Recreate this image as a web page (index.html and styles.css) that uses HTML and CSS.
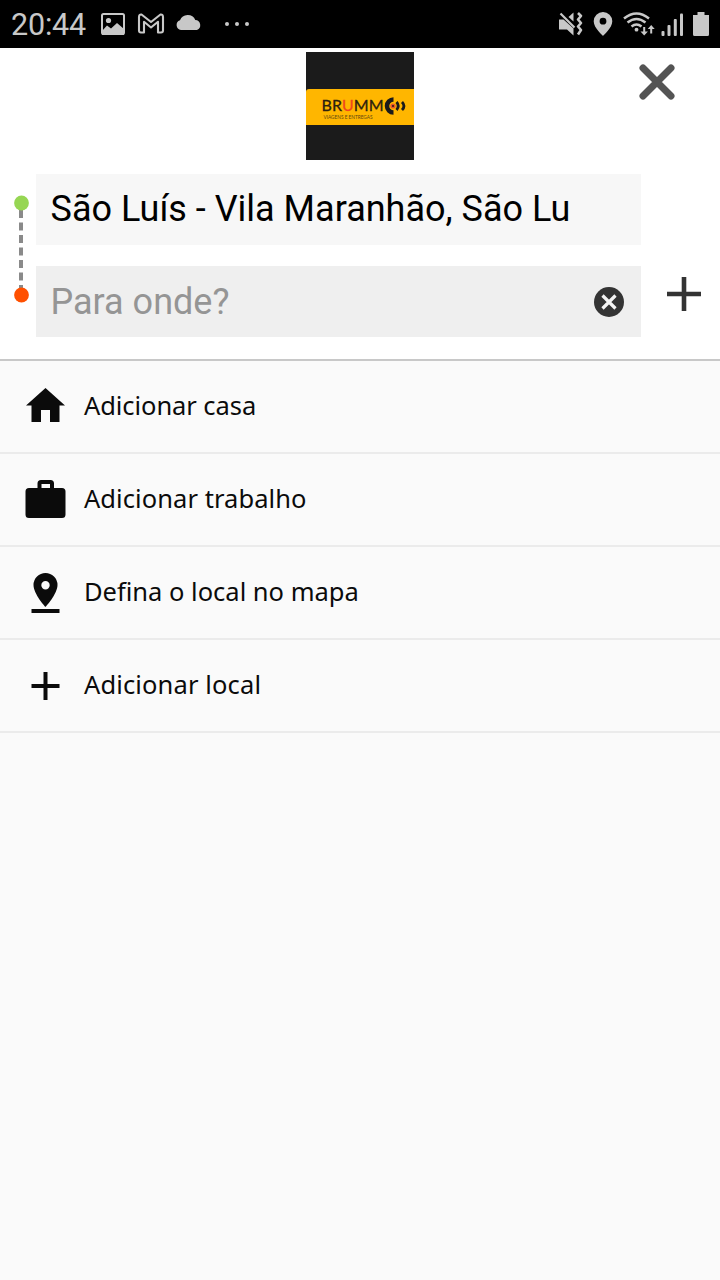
FILE: index.html
```html
<!DOCTYPE html>
<html lang="pt-BR">
<head>
<meta charset="utf-8">
<title>Para onde?</title>
<link rel="stylesheet" href="styles.css">
</head>
<body>
<div class="status-bar">
  <span class="clock">20:44</span>
  <svg class="st-left" width="164" height="48" viewBox="96 0 164 48" fill="#c8c8c8">
    <rect x="102" y="14" width="22" height="20" rx="1.5" fill="none" stroke="#c8c8c8" stroke-width="2"/>
    <circle cx="108.500" cy="20.500" r="2.600"/>
    <path d="M102 31l5-5.500 4 3 6-5.500 7 6V35h-22z"/>
    <path d="M139 30.500V17Q139 14.200 141.500 14.500L151 22 160.500 14.500Q163 14.200 163 17V30.500Q163 32.500 161 32.500H158V21.800L151 27.500 144 21.800V32.500H141Q139 32.500 139 30.500z" fill="none" stroke="#c8c8c8" stroke-width="2.100" stroke-linejoin="round"/>
    <path d="M181 30a5 5 0 0 1-1-9.700A8.200 8.200 0 0 1 195.300 20A5.200 5.200 0 0 1 197 30z"/>
    <circle cx="227" cy="24" r="2"/><circle cx="237" cy="24" r="2"/><circle cx="247" cy="24" r="2"/>
  </svg>
  <svg class="st-right" width="164" height="48" viewBox="556 0 164 48" fill="#c8c8c8">
    <path d="M559 19.500h4.500L573.500 28.500v7l-6.500-6H559z"/>
    <path d="M568.500 17l5-4.500v9z"/>
    <path d="M560.500 13.500l14 14" stroke="#c8c8c8" stroke-width="2.200"/>
    <path d="M578 13l3 3-3 3.500 3 3.500-3 3.500 3 3.500-3 4.500" fill="none" stroke="#c8c8c8" stroke-width="2.600" stroke-linejoin="round"/>
    <path fill-rule="evenodd" d="M603 12a9.300 9.300 0 0 0-9.300 9.300C593.700 28 603 36 603 36s9.300-8 9.300-14.700A9.300 9.300 0 0 0 603 12zm0 5.800a3.400 3.400 0 1 1 0 6.800 3.400 3.400 0 0 1 0-6.800z"/>
    <g fill="none" stroke="#c8c8c8" stroke-width="2.500">
      <path d="M624 18.500Q636.500 8.500 649 18.500"/><path d="M627.500 22.500Q636.500 15.500 645.500 22.500"/><path d="M631.500 26.500Q636.500 22.500 641.500 26.500"/>
    </g>
    <circle cx="636.500" cy="29.700" r="1.900"/>
    <path d="M643.200 27v4.500h-2.700l3.700 4 3.700-4h-2.700V27zM650.200 33.500V29h-2.500l3.500-4 3.500 4h-2.500v4.500z"/>
    <rect x="661.500" y="31" width="3" height="5" rx="1"/><rect x="667.500" y="25" width="3" height="11" rx="1"/><rect x="673.800" y="19" width="3" height="17" rx="1"/><rect x="680" y="13.500" width="3" height="22.500" rx="1"/>
    <path d="M697.500 12h7v3h4.500v19.500q0 1.500-1.500 1.500h-13q-1.500 0-1.500-1.500V15h4.500z"/>
  </svg>
</div>

<header class="header">
  <div class="brand">
    <svg width="108" height="108" viewBox="0 0 108 108">
      <rect width="108" height="108" fill="#1b1b1b"/>
      <path d="M0 73V40q0-3 3-3h105v36z" fill="#ffb600"/>
      <text class="logo-name" x="15.500" y="58.700" textLength="62">BR<tspan class="logo-accent">U</tspan>MM</text>
      <text class="logo-tag" x="17.500" y="67" textLength="49" lengthAdjust="spacingAndGlyphs">VIAGENS E ENTREGAS</text>
      <path d="M87.500 47.500a6.500 6.500 0 1 0 0 13" fill="none" stroke="#1b1b1b" stroke-width="4.500"/>
      <circle cx="87" cy="54" r="2.600" fill="#e8552b"/>
      <circle cx="87" cy="54" r="1" fill="#1b1b1b"/>
      <path d="M90.500 50q3.500 4 0 8M96 50q4 4 0 8" fill="none" stroke="#1b1b1b" stroke-width="2.800"/>
    </svg>
    <svg class="close" width="36" height="36" viewBox="0 0 36 36"><path d="M4 4l28 28M32 4L4 32" stroke="#545454" stroke-width="7" stroke-linecap="round"/></svg>
  </div>
  <div class="route">
    <svg class="track" width="36" height="163" viewBox="0 0 36 163">
      <path d="M21 33v84" stroke="#8a8a8a" stroke-width="4" stroke-dasharray="8 4.500" stroke-dashoffset="-3"/>
      <path d="M21 33v11" stroke="#8a8a8a" stroke-width="4"/>
      <circle cx="21.500" cy="29" r="7.400" fill="#96d653"/>
      <circle cx="21.500" cy="121" r="7.400" fill="#ff5000"/>
    </svg>
    <div class="fields">
      <div class="field origin">São Luís - Vila Maranhão, São Lu</div>
      <div class="field destination">
        <span>Para onde?</span>
        <svg width="30" height="30" viewBox="0 0 30 30"><circle cx="15" cy="15" r="15" fill="#343434"/><path d="M8.500 8.500l13 13M21.500 8.500l-13 13" stroke="#f4f4f4" stroke-width="3.200"/></svg>
      </div>
    </div>
    <svg class="add-stop" width="34" height="34" viewBox="0 0 34 34"><path d="M17 0v34M0 17h34" stroke="#333" stroke-width="4.600"/></svg>
  </div>
</header>

<ul class="places">
  <li class="place">
    <svg width="42" height="42" viewBox="0 0 42 42"><path d="M20.500 3L1 20.500h5.500V37H16V25h9v12h9.500V20.500H40z"/></svg>
    <span class="l-home">Adicionar casa</span>
  </li>
  <li class="place">
    <svg width="42" height="42" viewBox="0 0 42 42"><path fill-rule="evenodd" d="M4 10h8.500V5.500q0-3.500 3.500-3.500h9.500q3.500 0 3.500 3.500V10h8q3.500 0 3.500 3.500v23q0 3.500-3.500 3.500H4Q.5 40 .5 36.500v-23Q.5 10 4 10zm12.500 0H25V6h-8.500z"/></svg>
    <span class="l-work">Adicionar trabalho</span>
  </li>
  <li class="place">
    <svg width="42" height="42" viewBox="0 0 42 42"><path fill-rule="evenodd" d="M20.500 2a12 12 0 0 0-12 12c0 9 12 22 12 22s12-13 12-22a12 12 0 0 0-12-12zm0 8a4.200 4.200 0 1 1 0 8.400 4.200 4.200 0 0 1 0-8.400z"/><path d="M6.500 38h28v4h-28z"/></svg>
    <span class="l-map">Defina o local no mapa</span>
  </li>
  <li class="place">
    <svg width="42" height="42" viewBox="0 0 42 42"><path d="M18.500 8h4v12h12v4h-12v12h-4V24h-12v-4h12z"/></svg>
    <span class="l-add">Adicionar local</span>
  </li>
</ul>
</body>
</html>
```
FILE: styles.css
```css
* { box-sizing: border-box; }
body { margin: 0; min-height: 1280px; background: #fafafa; color: #0b0b0b; font-family: Roboto, sans-serif; }
svg { display: block; flex: none; }
.status-bar { height: 48px; background: #000; display: flex; align-items: center; padding-left: 11px; overflow: hidden; }
.clock { width: 85px; flex: none; color: #c8c8c8; font-size: 30.5px; line-height: 48px; letter-spacing: -0.2px; padding-top: 1px; }
.st-right { margin-left: auto; }
.header { height: 313px; background: #fff; border-bottom: 2px solid #c8c8c8; padding-top: 4px; }
.brand { display: grid; grid-template-columns: 1fr 108px 1fr; height: 122px; }
.brand > :first-child { grid-column: 2; }
.close { justify-self: end; margin: 12px 45px 0 0; }
.logo-name { font: 16px Lato, sans-serif; fill: #2b2110; stroke: #2b2110; stroke-width: 0.3px; }
.logo-accent { fill: #f0461e; stroke: #f0461e; }
.logo-tag { font: 5px Lato, sans-serif; fill: #5c4510; }
.route { display: flex; align-items: flex-start; }
.fields { width: 605px; display: grid; gap: 21px; }
.field { height: 71px; display: flex; align-items: center; justify-content: space-between; padding: 0 17.500px 2px 14.500px; font-size: 36px; white-space: nowrap; }
.origin { background: #f7f7f7; color: #000; }
.destination { background: #efefef; color: #959595; padding-bottom: 0; }
.add-stop { margin: 103px 0 0 26px; }
.places { list-style: none; margin: 0; padding: 0; }
.place { height: 93px; border-bottom: 2px solid #ebebeb; display: flex; align-items: center; gap: 17px; padding-left: 25px; font: 25.5px "Noto Sans", sans-serif; }
.place svg { fill: #0b0b0b; margin-top: -1px; }
.place span { white-space: nowrap; padding-bottom: 3px; }
.l-home { letter-spacing: -0.07px; }
.l-work { letter-spacing: 0.07px; }
.l-add { letter-spacing: 0.13px; }
```
